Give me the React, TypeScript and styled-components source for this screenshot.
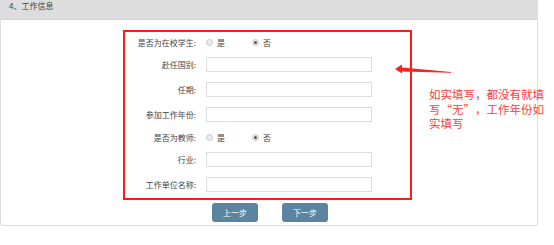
import React from "react";
import styled, { createGlobalStyle } from "styled-components";

const Global = createGlobalStyle`
  html, body { margin: 0; padding: 0; background: #fff; }
  body { font-family: "Noto Sans CJK SC", "Noto Sans", sans-serif; color: #333; }
`;

const Page = styled.div`
  position: relative;
  width: 554px;
  height: 245px;
  overflow: hidden;
`;

const Panel = styled.div`
  box-sizing: border-box;
  width: 538px;
  height: 226px;
  border: 1px solid #dedede;
  border-top: none;
  border-radius: 0 0 3px 3px;
  display: flex;
  flex-direction: column;
`;

const Header = styled.div`
  height: 19px;
  background: #dddddd;
  border-bottom: 1px solid #d2d2d2;
  font-size: 8px;
  line-height: 12px;
  padding-left: 8px;
  color: #444;
`;

const Body = styled.div`
  display: flex;
  flex-direction: column;
  padding-left: 122px;
  padding-top: 10px;
`;

const FormBox = styled.div`
  box-sizing: border-box;
  width: 289px;
  height: 170px;
  border: 2px solid #ff1a1a;
  display: flex;
  flex-direction: column;
`;

const Row = styled.div<{ $h: number }>`
  display: flex;
  align-items: center;
  height: ${(p) => p.$h}px;
`;

const Label = styled.div`
  width: 71px;
  text-align: right;
  font-size: 8px;
  color: #444;
  margin-right: 10px;
  white-space: nowrap;
`;

const Input = styled.div`
  box-sizing: border-box;
  width: 166px;
  height: 15px;
  border: 1px solid #dcdcdc;
  background: #fff;
`;

const RadioGroup = styled.div`
  display: flex;
  align-items: center;
`;

const RadioItem = styled.div`
  display: flex;
  align-items: center;
  width: 46px;
  font-size: 8px;
  color: #444;
`;

const Dot = styled.span<{ $on: boolean }>`
  box-sizing: border-box;
  position: relative;
  width: 7px;
  height: 7px;
  border-radius: 50%;
  border: 1px solid #c8c8c8;
  background: #ececec;
  margin-right: 4px;
  &::after {
    content: "";
    display: ${(p) => (p.$on ? "block" : "none")};
    position: absolute;
    left: 1px;
    top: 1px;
    width: 3px;
    height: 3px;
    border-radius: 50%;
    background: #555;
  }
`;

const Buttons = styled.div`
  display: flex;
  gap: 24px;
  margin-top: 3px;
  margin-left: 89px;
`;

const Btn = styled.div`
  width: 46px;
  height: 19px;
  border-radius: 3px;
  background: #5b84a0;
  color: #fff;
  font-size: 8px;
  display: flex;
  align-items: center;
  justify-content: center;
`;

const Note = styled.div`
  position: absolute;
  left: 429px;
  top: 87px;
  display: flex;
  flex-direction: column;
  font-size: 11.5px;
  color: #ff3a3a;
`;

const NoteLine = styled.div`
  height: 14.7px;
  line-height: 14.7px;
  white-space: nowrap;
`;

const Quote = styled.span<{ $side: "left" | "right" }>`
  display: inline-block;
  width: 1em;
  line-height: 1;
  text-align: ${(p) => p.$side};
`;

const Arrow = styled.svg`
  position: absolute;
  left: 390px;
  top: 60px;
`;

const Radio = ({ yes }: { yes: boolean }) => (
  <RadioGroup>
    <RadioItem>
      <Dot $on={yes} />是
    </RadioItem>
    <RadioItem>
      <Dot $on={!yes} />否
    </RadioItem>
  </RadioGroup>
);

export default function App() {
  return (
    <Page>
      <Global />
      <Panel>
        <Header>4、工作信息</Header>
        <Body>
          <FormBox>
            <Row $h={20}>
              <Label>是否为在校学生:</Label>
              <Radio yes={false} />
            </Row>
            <Row $h={25}>
              <Label>赴任国别:</Label>
              <Input />
            </Row>
            <Row $h={25}>
              <Label>任期:</Label>
              <Input />
            </Row>
            <Row $h={25}>
              <Label>参加工作年份:</Label>
              <Input />
            </Row>
            <Row $h={20}>
              <Label>是否为教师:</Label>
              <Radio yes={false} />
            </Row>
            <Row $h={25}>
              <Label>行业:</Label>
              <Input />
            </Row>
            <Row $h={25}>
              <Label>工作单位名称:</Label>
              <Input />
            </Row>
          </FormBox>
          <Buttons>
            <Btn>上一步</Btn>
            <Btn>下一步</Btn>
          </Buttons>
        </Body>
      </Panel>
      <Arrow width="64" height="20" viewBox="0 0 64 20">
        <polygon points="5,9 12,4.5 12,7.5 61,12 61,12.8 12,11.5 12,13.5" fill="#ff2020" />
      </Arrow>
      <Note lang="zh-CN">
        <NoteLine>如实填写，都没有就填</NoteLine>
        <NoteLine>
          写<Quote $side="right">“</Quote>无<Quote $side="left">”</Quote>，工作年份如
        </NoteLine>
        <NoteLine>实填写</NoteLine>
      </Note>
    </Page>
  );
}
